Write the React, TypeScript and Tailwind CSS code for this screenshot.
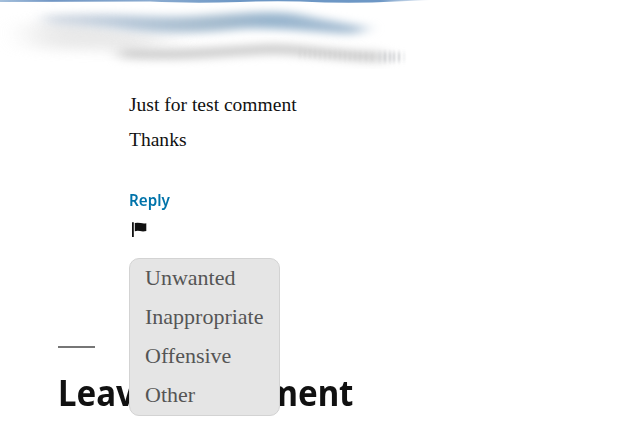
const reasons = ["Unwanted", "Inappropriate", "Offensive", "Other"];

function BlurredStrokes() {
  return (
    <svg className="block h-[75px] w-full shrink-0" viewBox="0 0 639 75" aria-hidden="true">
      <defs>
        <filter id="soft" x="-40%" y="-100%" width="180%" height="300%" colorInterpolationFilters="sRGB">
          <feGaussianBlur stdDeviation="18 6" />
        </filter>
        <filter id="tight" x="-20%" y="-150%" width="140%" height="400%" colorInterpolationFilters="sRGB">
          <feGaussianBlur stdDeviation="8 4" />
        </filter>
        <filter id="tick" x="-20%" y="-50%" width="140%" height="200%" colorInterpolationFilters="sRGB">
          <feGaussianBlur stdDeviation="0.8 2" />
        </filter>
        <linearGradient id="edge" x1="0" x2="1">
          <stop offset="0" stopColor="#a4bfdb" />
          <stop offset=".12" stopColor="#7196c4" />
          <stop offset=".35" stopColor="#8aabd0" />
          <stop offset=".55" stopColor="#6d97c5" />
          <stop offset=".88" stopColor="#6d97c5" />
          <stop offset="1" stopColor="#6d97c5" stopOpacity="0" />
        </linearGradient>
        <linearGradient id="blue" x1="40" x2="370" gradientUnits="userSpaceOnUse">
          <stop offset="0" stopColor="#c9d1dd" stopOpacity=".7" />
          <stop offset=".25" stopColor="#b9c9d9" />
          <stop offset=".55" stopColor="#a3bacd" />
          <stop offset=".7" stopColor="#97b4cd" />
          <stop offset="1" stopColor="#a6bdd2" />
        </linearGradient>
      </defs>
      <path d="M0 0H432L395 1.5Q350 4 300 1.5Q270 .8 240 2Q190 3.5 150 1.5L0 2Z" fill="url(#edge)" />
      <path d="M30 24Q75 18 130 30T165 42L145 50Q90 51 35 48Z" fill="#dedede" opacity=".65" filter="url(#soft)" />
      <path d="M42 15C125 12 145 18 195 16C245 13 284 9 310 17L370 28L353 34C318 33 280 27 240 29C190 35 150 34 112 28L48 24Z" fill="url(#blue)" filter="url(#tight)" />
      <path d="M120 53C180 57 225 51 275 49C310 50 335 56 385 57" fill="none" stroke="#cdcdcd" strokeWidth="10" filter="url(#tight)" />
      <g filter="url(#tick)" stroke="#c3c6ca" strokeWidth="2">
        {[380, 385, 390, 394, 399, 404].map((x, i) => (
          <path key={x} d={`M${x} 52V62`} opacity={i === 5 ? 0.3 : i === 0 ? 0.4 : 0.85} />
        ))}
      </g>
      <g filter="url(#tick)" stroke="#c6c6c6" strokeWidth="2" opacity=".3">
        {[300, 305, 310, 315, 320, 325, 330, 335, 340, 345, 350, 355, 360, 366, 372].map((x) => (
          <path key={x} d={`M${x} ${49 + (x - 300) / 20}v9`} />
        ))}
      </g>
    </svg>
  );
}

export default function App() {
  return (
    <main className="h-[436px] w-[639px] overflow-hidden bg-white text-[#111]">
      <BlurredStrokes />
      <article className="ml-[129px] mt-3 flex flex-col items-start">
        <div className="font-['Liberation_Serif',serif] text-[19.55px] leading-[35px]">
          <p>Just for test comment</p>
          <p>Thanks</p>
        </div>
        <a href="#comment-form" className="mt-[32px] block origin-left scale-x-[0.95] font-['Noto_Sans',sans-serif] text-[16px] font-semibold leading-[22px] text-[#0073aa]">
          Reply
        </a>
        <div className="relative mt-[11px] h-[15px]">
          <button aria-label="Flag comment" className="ml-[3px] block">
            <svg width="15" height="15" viewBox="0 0 15 15" fill="#111">
              <path d="M0 .3H1.8V15H0ZM2.8 1Q5.8 .4 8.8 1.1Q12 1.8 14.3 1.2V9.1Q11 9.8 8 9.1Q5.5 8.5 2.8 9.2Z" />
            </svg>
          </button>
          <ul className="absolute left-0 top-[36px] z-10 h-[158px] w-[151px] rounded-[10px] border border-[#d3d3d3] bg-[#e5e5e5] px-[15px] font-['Liberation_Serif',serif] text-[22px] leading-[39px] text-[#555]">
            {reasons.map((reason) => (
              <li key={reason} className="-mt-px mb-px h-[39px]">{reason}</li>
            ))}
          </ul>
        </div>
      </article>
      <section className="ml-[58px] mt-[109px]">
        <div className="h-[2px] w-[37px] bg-[#767676]" />
        <h2 className="mt-[20px] w-max origin-left scale-x-[0.918] font-['Noto_Sans',sans-serif] text-[36px] font-bold leading-[50px]">
          Leave a Comment
        </h2>
      </section>
    </main>
  );
}
